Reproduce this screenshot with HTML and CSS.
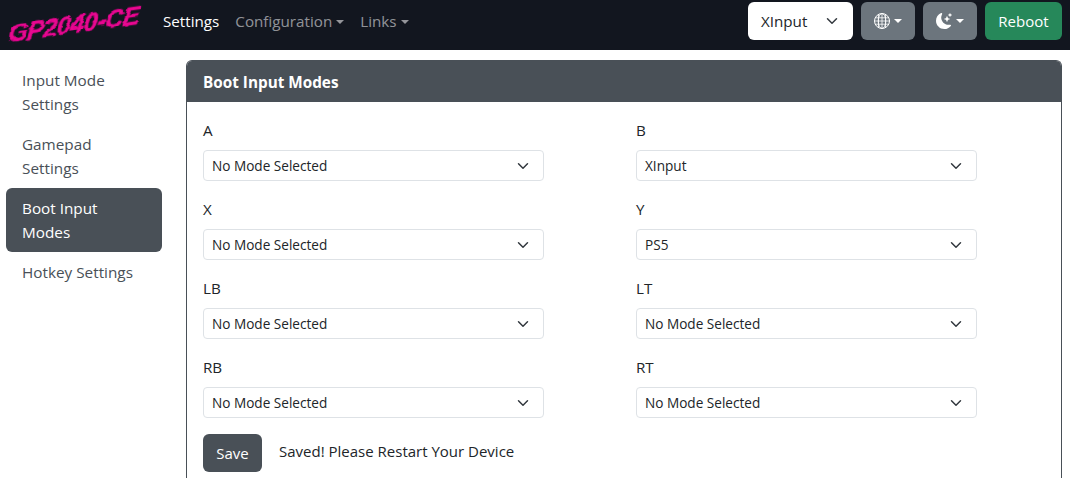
FILE: index.html
```html
<!DOCTYPE html>
<html lang="en">
<head>
<meta charset="utf-8">
<title>GP2040-CE</title>
<link rel="stylesheet" href="styles.css">
</head>
<body>
<svg class="defs" width="0" height="0" aria-hidden="true"><filter id="brush" x="-5%" y="-20%" width="110%" height="140%"><feTurbulence type="fractalNoise" baseFrequency="0.09 0.3" numOctaves="2" seed="4"/><feDisplacementMap in="SourceGraphic" scale="3" xChannelSelector="R" yChannelSelector="G"/></filter></svg>
<nav class="navbar">
  <div class="brand">GP2040-CE</div>
  <div class="nav-links">
    <a class="nav-link active">Settings</a>
    <a class="nav-link caret">Configuration</a>
    <a class="nav-link caret">Links</a>
  </div>
  <div class="nav-actions">
    <div class="mode-select"><span>XInput</span><svg class="chev" viewBox="0 0 16 16"><path d="M2 5l6 6 6-6" fill="none" stroke="#343a40" stroke-width="2" stroke-linecap="round" stroke-linejoin="round"/></svg></div>
    <button class="btn btn-grey caret">
      <svg class="ico" viewBox="0 0 16 16"><circle cx="8" cy="8" r="7.500" fill="none" stroke="#fff" stroke-width="1"/><ellipse cx="8" cy="8" rx="3.800" ry="7.500" fill="none" stroke="#fff" stroke-width=".9"/><path d="M8 0v16M0 8h16M1.200 4.800h13.600M1.200 11.200h13.600M4.500 1v14M11.500 1v14" stroke="#fff" stroke-width=".8"/></svg>
    </button>
    <button class="btn btn-grey caret">
      <svg class="ico" viewBox="0 0 16 16"><path fill="#fff" d="M6 .278a.77.77 0 0 1 .08.858 7.2 7.2 0 0 0-.878 3.46c0 4.021 3.278 7.277 7.318 7.277q.792-.001 1.533-.16a.79.79 0 0 1 .81.316.73.73 0 0 1-.031.893A8.35 8.35 0 0 1 8.344 16C3.734 16 0 12.286 0 7.710 0 4.266 2.114 1.312 5.124.06A.75.75 0 0 1 6 .278"/><path fill="#fff" d="M10.794 3.148a.217.217 0 0 1 .412 0l.387 1.162c.173.518.579.924 1.097 1.097l1.162.387a.217.217 0 0 1 0 .412l-1.162.387a1.730 1.730 0 0 0-1.097 1.097l-.387 1.162a.217.217 0 0 1-.412 0l-.387-1.162A1.730 1.730 0 0 0 9.310 6.593l-1.162-.387a.217.217 0 0 1 0-.412l1.162-.387a1.730 1.730 0 0 0 1.097-1.097zM13.863.099a.145.145 0 0 1 .274 0l.258.774c.115.346.386.617.732.732l.774.258a.145.145 0 0 1 0 .274l-.774.258a1.160 1.160 0 0 0-.732.732l-.258.774a.145.145 0 0 1-.274 0l-.258-.774a1.160 1.160 0 0 0-.732-.732l-.774-.258a.145.145 0 0 1 0-.274l.774-.258c.346-.115.617-.386.732-.732z"/></svg>
    </button>
    <button class="btn btn-green">Reboot</button>
  </div>
</nav>
<div class="layout">
  <aside class="sidebar">
    <a class="side-link">Input Mode Settings</a>
    <a class="side-link">Gamepad Settings</a>
    <a class="side-link active">Boot Input Modes</a>
    <a class="side-link">Hotkey Settings</a>
  </aside>
  <main class="card">
    <header class="card-head">Boot Input Modes</header>
    <div class="card-body">
      <div class="grid">
        <div class="field"><label>A</label><div class="select">No Mode Selected</div></div>
        <div class="field"><label>B</label><div class="select">XInput</div></div>
        <div class="field"><label>X</label><div class="select">No Mode Selected</div></div>
        <div class="field"><label>Y</label><div class="select">PS5</div></div>
        <div class="field"><label>LB</label><div class="select">No Mode Selected</div></div>
        <div class="field"><label>LT</label><div class="select">No Mode Selected</div></div>
        <div class="field"><label>RB</label><div class="select">No Mode Selected</div></div>
        <div class="field"><label>RT</label><div class="select">No Mode Selected</div></div>
      </div>
      <div class="save-row"><button class="btn btn-dark">Save</button><span class="saved">Saved! Please Restart Your Device</span></div>
    </div>
  </main>
</div>
</body>
</html>
```
FILE: styles.css
```css
* { box-sizing: border-box; }
html, body { margin: 0; height: 478px; overflow: hidden; }
body { font-family: "Open Sans", "Noto Sans", sans-serif; color: #212529; background: #fff; font-size: 15.2px; }
.defs { position: absolute; }
.navbar { height: 50px; background: #12161f; display: flex; align-items: flex-start; padding: 2px 8px 0 0; }
.brand { width: 163px; height: 34px; margin-top: 6px; padding: 4px 0 0 8px; color: #e6078f; font: italic 700 25px/1 "Liberation Sans", sans-serif; letter-spacing: -.3px; -webkit-text-stroke: .6px #e6078f; transform: rotate(-8deg) skewX(-14deg); transform-origin: 72px 16px; white-space: nowrap; filter: url(#brush); }
.nav-links { display: flex; gap: 16px; line-height: 38px; }
.nav-link { color: rgba(255,255,255,.55); font-size: 15.2px; }
.nav-link.active { color: #fff; }
.caret::after { content: ""; display: inline-block; margin-left: 4px; vertical-align: 3px; border-top: 4px solid; border-left: 4px solid transparent; border-right: 4px solid transparent; }
.nav-actions { margin-left: auto; display: flex; gap: 8px; align-items: center; }
.mode-select { width: 105px; height: 38px; background: #fff; border-radius: 6px; display: flex; align-items: center; justify-content: space-between; padding: 0 15px 0 13px; font-size: 15.2px; }
.chev { width: 12px; height: 12px; }
.btn { border: 0; border-radius: 6px; height: 38px; padding: 0 12px; font-family: inherit; font-size: 15px; color: #fff; display: inline-flex; align-items: center; }
.btn-grey { background: #6c757d; width: 54px; justify-content: center; }
.btn-grey::after { margin-left: 4px; vertical-align: 0; }
.ico { width: 16px; height: 16px; }
.btn-green { background: #26885a; width: 77px; justify-content: center; }
.btn-dark { background: #495057; width: 59px; justify-content: center; }
.layout { display: flex; padding: 10px 8px 0 6px; gap: 24px; }
.sidebar { width: 156px; flex: none; display: flex; flex-direction: column; }
.side-link { display: block; padding: 8px 16px; line-height: 24px; color: #495057; border-radius: 6px; font-size: 15.3px; }
.side-link.active { background: #495057; color: #fff; }
.card { flex: 1; border: 1px solid #495057; border-bottom: 0; border-radius: 6px 6px 0 0; height: 418px; }
.card-head { height: 41px; background: #495057; color: #fff; font-weight: 700; font-size: 15.3px; padding: 0 16px; display: flex; align-items: center; border-radius: 5px 5px 0 0; }
.card-body { padding: 16px; }
.grid { display: grid; grid-template-columns: 341px 341px; column-gap: 92px; row-gap: 16px; }
.field label { display: block; line-height: 24px; margin-bottom: 8px; font-size: 15.2px; }
.select { height: 31px; border: 1px solid #dee2e6; border-radius: 4px; padding: 0 8px; font-size: 13.6px; line-height: 29px; background: #fff url("data:image/svg+xml,%3csvg xmlns='http://www.w3.org/2000/svg' viewBox='0 0 16 16'%3e%3cpath fill='none' stroke='%23343a40' stroke-linecap='round' stroke-linejoin='round' stroke-width='2' d='M2 5l6 6 6-6'/%3e%3c/svg%3e") no-repeat right 12px center / 16px 12px; }
.save-row { display: flex; align-items: center; margin-top: 16px; gap: 17px; }
.saved { font-size: 15px; margin-bottom: 4px; }
```
